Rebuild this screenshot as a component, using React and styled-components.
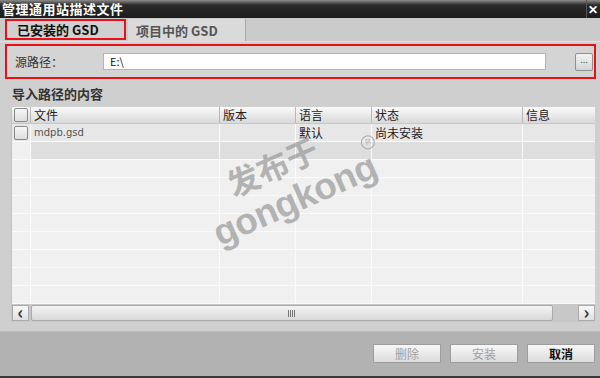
import React from "react";
import styled, { createGlobalStyle } from "styled-components";

const GlobalStyle = createGlobalStyle`
  * { box-sizing: border-box; }
  html, body { margin: 0; padding: 0; }
  body {
    font-family: "Noto Sans CJK SC", "Noto Sans", "Liberation Sans", sans-serif;
    font-size: 11px;
    color: #222;
    background: #cfcfcf;
  }
`;

const columns = [
  { key: "file", label: "文件", width: 189 },
  { key: "version", label: "版本", width: 76 },
  { key: "lang", label: "语言", width: 76 },
  { key: "state", label: "状态", width: 151 },
  { key: "info", label: "信息", width: 73 },
];

const rows = [
  { file: "mdpb.gsd", version: "", lang: "默认", state: "尚未安装", info: "" },
  {},
  {},
  {},
  {},
  {},
  {},
  {},
  {},
  {},
];

const App = () => {
  return (
    <Window>
      <GlobalStyle />
      <TitleBar>
        <span>管理通用站描述文件</span>
        <Close>✕</Close>
      </TitleBar>
      <TabBar>
        <Tab active>已安装的 GSD</Tab>
        <Tab>项目中的 GSD</Tab>
      </TabBar>
      <SourceBox>
        <Label>源路径：</Label>
        <PathInput>E:\</PathInput>
        <BrowseButton>...</BrowseButton>
      </SourceBox>
      <SectionTitle>导入路径的内容</SectionTitle>
      <Table>
        <HeaderRow>
          <CheckCell header>
            <Check />
          </CheckCell>
          {columns.map((c) => (
            <HeadCell key={c.key} style={{ width: c.width }}>
              {c.label}
            </HeadCell>
          ))}
        </HeaderRow>
        {rows.map((r, i) => (
          <Row key={i} tone={i === 0 ? "first" : i === 1 ? "second" : "plain"}>
            <CheckCell>{i === 0 && <Check />}</CheckCell>
            {columns.map((c) => (
              <Cell key={c.key} style={{ width: c.width }} mono={c.key === "file"}>
                {r[c.key]}
              </Cell>
            ))}
          </Row>
        ))}
        <ScrollBar>
          <ScrollButton>‹</ScrollButton>
          <Thumb>
            <Grip />
          </Thumb>
          <ScrollButton>›</ScrollButton>
        </ScrollBar>
      </Table>
      <Footer>
        <DialogButton disabled>删除</DialogButton>
        <DialogButton disabled>安装</DialogButton>
        <DialogButton primary>取消</DialogButton>
      </Footer>
      <Watermark>
        <div className="cn">发布于</div>
        <div className="en">
          gongkong<Registered>R</Registered>
        </div>
      </Watermark>
    </Window>
  );
};

const Window = styled.div`
  position: relative;
  width: 600px;
  height: 378px;
  display: flex;
  flex-direction: column;
  background: #cfcfcf;
  border-bottom: 2px solid #3a3a3a;
  overflow: hidden;
`;

const TitleBar = styled.div`
  height: 18px;
  display: flex;
  align-items: center;
  justify-content: space-between;
  padding-left: 2px;
  background: linear-gradient(#8c8c8c 0px, #2a2a2a 5px, #1c1c1c 100%);
  color: #fff;
  font-weight: bold;
  font-size: 13px;
  line-height: 18px;
  letter-spacing: 0.5px;
`;

const Close = styled.div`
  width: 14px;
  height: 18px;
  border-left: 1px solid #555;
  font-size: 12px;
  text-align: center;
  color: #fff;
`;

const TabBar = styled.div`
  height: 24px;
  display: flex;
  align-items: stretch;
  padding: 1px 0 0 5px;
  background: #cbcbcb;
  border-bottom: 1px solid #e0e0e0;
`;

const Tab = styled.div`
  width: ${(p) => (p.active ? "121px" : "118px")};
  margin-right: 2px;
  padding-left: ${(p) => (p.active ? "10px" : "8px")};
  display: flex;
  align-items: center;
  font-size: 13px;
  font-weight: bold;
  color: ${(p) => (p.active ? "#111" : "#555")};
  background: ${(p) => (p.active ? "#d0d0d0" : "#dadada")};
  border: ${(p) => (p.active ? "2px solid #e8111a" : "none")};
  border-right: ${(p) => (p.active ? "2px solid #e8111a" : "1px solid #a8a8a8")};
  margin-bottom: ${(p) => (p.active ? "1px" : "0")};
`;

const SourceBox = styled.div`
  height: 35px;
  margin: 2px 4px 0 5px;
  display: flex;
  align-items: center;
  padding: 0 1px 0 8px;
  border: 2px solid #e8111a;
  background: #d4d4d4;
`;

const Label = styled.div`
  width: 88px;
  font-size: 12px;
  color: #333;
`;

const PathInput = styled.div`
  width: 443px;
  height: 17px;
  padding-left: 6px;
  background: #fff;
  border: 1px solid #b4b4b4;
  font-size: 11px;
  line-height: 15px;
  color: #111;
`;

const BrowseButton = styled.div`
  margin-left: auto;
  width: 18px;
  height: 18px;
  border: 1px solid #8e8e8e;
  border-radius: 2px;
  background: linear-gradient(#f2f2f2, #d4d4d4);
  font-size: 9px;
  line-height: 12px;
  text-align: center;
  color: #555;
`;

const SectionTitle = styled.div`
  height: 28px;
  padding: 5px 0 0 12px;
  font-size: 13px;
  font-weight: bold;
  color: #333;
`;

const Table = styled.div`
  margin-left: 11px;
  width: 584px;
  display: flex;
  flex-direction: column;
  background: #f0f0f0;
  border-left: 1px solid #c4c4c4;
`;

const HeaderRow = styled.div`
  display: flex;
  height: 17px;
  background: linear-gradient(#fafafa, #d9d9d9);
  border-bottom: 1px solid #c6c6c6;
`;

const CheckCell = styled.div`
  width: 19px;
  flex: none;
  display: flex;
  align-items: center;
  justify-content: center;
  border-right: 1px solid ${(p) => (p.header ? "#b8b8b8" : "#fbfbfb")};
`;

const Check = styled.div`
  width: 14px;
  height: 14px;
  border: 1px solid #8a8a8a;
  border-radius: 2px;
  background: linear-gradient(#f6f6f6, #dedede);
`;

const HeadCell = styled.div`
  flex: none;
  padding-left: 3px;
  font-size: 12px;
  line-height: 16px;
  color: #222;
  border-right: 1px solid #b8b8b8;
  &:last-child { border-right: none; }
`;

const Row = styled.div`
  display: flex;
  height: 18px;
  border-bottom: 1px solid #fbfbfb;
  background: ${(p) =>
    p.tone === "first" ? "#e7e7e7" : p.tone === "second" ? "#dedede" : "#f0f0f0"};
  & > ${CheckCell} {
    background: ${(p) => (p.tone === "first" ? "#e7e7e7" : "#f0f0f0")};
  }
`;

const Cell = styled.div`
  flex: none;
  padding-left: 3px;
  font-size: 12px;
  line-height: 17px;
  color: #222;
  font-family: ${(p) =>
    p.mono ? '"DejaVu Sans", "Liberation Sans", sans-serif' : "inherit"};
  ${(p) => p.mono && "font-size: 10px; color: #555;"}
  border-right: 1px solid #fbfbfb;
  &:last-child { border-right: none; }
`;

const ScrollBar = styled.div`
  display: flex;
  height: 18px;
  padding-top: 1px;
  background: #c8c8c8;
`;

const ScrollButton = styled.div`
  width: 17px;
  height: 16px;
  border: 1px solid #aaa;
  background: linear-gradient(#f8f8f8, #e0e0e0);
  font-size: 18px;
  font-weight: bold;
  line-height: 11px;
  text-align: center;
  color: #333;
  &:last-child { margin-left: auto; }
`;

const Thumb = styled.div`
  width: 522px;
  height: 16px;
  margin-left: 2px;
  position: relative;
  border: 1px solid #aaa;
  border-radius: 2px;
  background: linear-gradient(#f4f4f4, #d8d8d8);
`;

const Grip = styled.div`
  position: absolute;
  left: 256px;
  top: 4px;
  width: 7px;
  height: 7px;
  background: repeating-linear-gradient(90deg, #777 0 1px, transparent 1px 2px);
`;

const Footer = styled.div`
  margin-top: 9px;
  flex: 1;
  display: flex;
  justify-content: flex-end;
  gap: 9px;
  padding: 12px 5px 0 0;
  background: #b2b2b2;
  border-top: 1px solid #bdbdbd;
`;

const DialogButton = styled.div`
  width: 68px;
  height: 19px;
  border: 1px solid #9d9d9d;
  border-radius: 1px;
  background: linear-gradient(#f7f7f7, #dcdcdc);
  font-size: 12px;
  line-height: 17px;
  text-align: center;
  color: ${(p) => (p.disabled ? "#a0a0a0" : "#111")};
  font-weight: ${(p) => (p.primary ? "bold" : "normal")};
`;

const Watermark = styled.div`
  position: absolute;
  left: 205px;
  top: 142px;
  width: 180px;
  text-align: center;
  white-space: nowrap;
  transform: rotate(-24deg);
  transform-origin: 90px 58px;
  color: rgba(155, 155, 155, 0.72);
  font-family: "Liberation Sans", "Noto Sans CJK SC", sans-serif;
  font-weight: bold;
  pointer-events: none;
  .cn {
    font-size: 32px;
    line-height: 34px;
    padding-right: 14px;
    font-family: "Noto Sans CJK SC", sans-serif;
  }
  .en {
    margin-top: 4px;
    font-size: 37px;
    line-height: 40px;
    letter-spacing: -0.5px;
  }
`;

const Registered = styled.span`
  display: inline-block;
  vertical-align: top;
  position: relative;
  top: -10px;
  left: -4px;
  width: 14px;
  height: 14px;
  margin-right: -14px;
  border: 1.5px solid rgba(155, 155, 155, 0.8);
  border-radius: 50%;
  font-size: 8px;
  line-height: 11px;
  letter-spacing: 0;
  text-align: center;
  font-weight: normal;
`;

export default App;
